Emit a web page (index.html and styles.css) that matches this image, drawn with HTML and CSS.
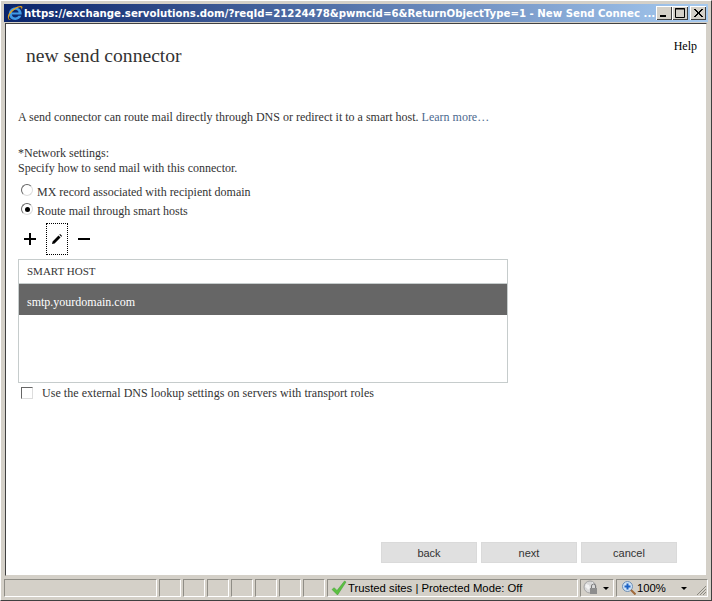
FILE: index.html
```html
<!DOCTYPE html>
<html lang="en">
<head>
<meta charset="utf-8">
<title>New Send Connector</title>
<link rel="stylesheet" href="styles.css">
</head>
<body>
<div class="window">
  <div class="titlebar">
    <svg class="ie" width="16" height="17" viewBox="1 1 17 17"><path d="M16.5 10.500H6.200c.2 2 1.700 3.200 3.600 3.200 1.400 0 2.600-.6 3.300-1.700h3.100c-1 2.700-3.400 4.300-6.400 4.300-3.900 0-6.800-2.800-6.800-6.600C3 6 5.800 3.200 9.800 3.200c3.900 0 6.800 2.900 6.800 6.800zM6.300 8.400h7c-.2-1.700-1.600-2.800-3.500-2.800-1.800 0-3.200 1.100-3.500 2.800z" fill="#3f9ae6"/><path d="M2.200 14.500C.8 11.500 5 5 12.500 2.100c2.600-1 4.400-.9 4.800.2.300.8-.1 2-1 3.200.2-1.200.2-2-.3-2.400-1-.8-3.300 0-5.800 1.500C5.800 7.400 2.700 11 3 14.200c.1 1.300 1 2 2.500 2-1.500.6-2.800.1-3.300-1.700z" fill="#e8a317"/></svg>
    <span class="title">https://exchange.servolutions.dom/?reqId=21224478&amp;pwmcid=6&amp;ReturnObjectType=1 - New Send Connec ...</span>
    <div class="winbtns">
      <span class="winbtn"><svg width="16" height="14" viewBox="0 0 16 14"><rect x="4" y="9" width="6" height="2" fill="#000"/></svg></span>
      <span class="winbtn"><svg width="16" height="14" viewBox="0 0 16 14"><path d="M3.500 2.500h9v9h-9z M3 3h10" fill="none" stroke="#000"/></svg></span>
      <span class="winbtn close"><svg width="16" height="14" viewBox="0 0 16 14"><path d="M4 3l8 8M12 3l-8 8M5 3l8 8M13 3l-8 8" fill="none" stroke="#000"/></svg></span>
    </div>
  </div>
  <main class="client">
    <header class="head">
      <h1>new send connector</h1>
      <a class="help">Help</a>
    </header>
    <p class="intro">A send connector can route mail directly through DNS or redirect it to a smart host. <a class="link">Learn more…</a></p>
    <p class="label">*Network settings:<br>Specify how to send mail with this connector.</p>
    <div class="radios">
      <div class="radio-row"><span class="radio"></span><span>MX record associated with recipient domain</span></div>
      <div class="radio-row"><span class="radio on"></span><span>Route mail through smart hosts</span></div>
    </div>
    <div class="toolbar">
      <span class="tool"><svg width="14" height="14" viewBox="0 0 14 14"><path d="M6 1h2v5h5v2H8v5H6V8H1V6h5z" fill="#000"/></svg></span>
      <span class="tool focus"><svg width="14" height="14" viewBox="0 0 14 14"><path d="M2 12l.6-2.600L8.500 3.500l2 2-5.900 5.900zM9.300 2.700l.8-.8 2 2-.8.800z" fill="#000"/></svg></span>
      <span class="tool"><svg width="14" height="14" viewBox="0 0 14 14"><rect x="1" y="6" width="12" height="2" fill="#000"/></svg></span>
    </div>
    <div class="list">
      <div class="list-head">SMART HOST</div>
      <div class="list-row">smtp.yourdomain.com</div>
    </div>
    <div class="check-row"><span class="check"></span><span class="check-text">Use the external DNS lookup settings on servers with transport roles</span></div>
    <div class="actions">
      <button class="btn">back</button>
      <button class="btn">next</button>
      <button class="btn">cancel</button>
    </div>
  </main>
  <footer class="status">
    <span class="cell grow"></span>
    <span class="cell small"></span><span class="cell small"></span><span class="cell small"></span><span class="cell small"></span><span class="cell small"></span><span class="cell small"></span><span class="cell small"></span>
    <span class="cell zone">
      <svg width="16" height="16" viewBox="0 0 16 16"><path d="M1 9.500l2.200-1.800L6 10.500 13.500 1 15 2 6.500 15z" fill="#5cc041" stroke="#3c9a34" stroke-width=".5"/></svg>
      <span>Trusted sites | Protected Mode: Off</span>
    </span>
    <span class="cell lock">
      <svg width="16" height="16" viewBox="0 0 16 16"><circle cx="7" cy="7" r="6" fill="#d9d9d9" stroke="#a5a5a5"/><path d="M3 4l3 1 1 3-2 2-1-2-2-1zM9 2l2 2-2 1z" fill="#f2f2f2"/><rect x="7" y="8" width="7" height="6" fill="#8d8d8d"/><path d="M8.500 8V6a2 2 0 0 1 4 0v2" fill="none" stroke="#777"/></svg>
      <span class="caret"></span>
    </span>
    <span class="cell zoom">
      <svg width="14" height="14" viewBox="0 0 14 14"><circle cx="5.500" cy="5.500" r="5" fill="#cfe3f7" stroke="#6e8fb5"/><path d="M4.500 2.500h2v2h2v2h-2v2h-2v-2h-2v-2h2z" fill="#1c62c4"/><path d="M9 9l4.500 4.500" stroke="#a06a3a" stroke-width="2"/></svg>
      <span>100%</span>
      <span class="caret wide"></span>
      <svg class="grip" width="12" height="12" viewBox="0 0 12 12"><path d="M11 2L2 11M11 5l-6 6M11 8l-3 3" stroke="#8a8880" fill="none"/></svg>
    </span>
  </footer>
</div>
</body>
</html>
```
FILE: styles.css
```css
* { box-sizing: border-box; }
html, body { margin: 0; padding: 0; }
body { width: 712px; height: 601px; overflow: hidden; background: #d4d0c8; font-family: "Liberation Serif", serif; font-size: 12px; color: #333; }
.window { width: 712px; height: 601px; display: flex; flex-direction: column; padding: 3px; border-right: 1px solid #404040; border-bottom: 1px solid #404040; border-top: 1px solid #fff; border-left: 1px solid #fff; background: #d4d0c8; }
.titlebar { flex: none; height: 18px; display: flex; align-items: center; gap: 1px; background: linear-gradient(90deg, #0a246a, #a6caf0); }
.ie { flex: none; margin-left: 3px; }
.title { flex: 1; min-width: 0; white-space: nowrap; overflow: hidden; color: #fff; font: bold 10.2px "DejaVu Sans", sans-serif; }
.winbtns { flex: none; display: flex; padding-right: 2px; }
.winbtn { width: 16px; height: 14px; display: block; background: #d4d0c8; box-shadow: inset 1px 1px 0 #fff, inset -1px -1px 0 #404040; }
.winbtn svg { display: block; }
.winbtn.close { margin-left: 2px; }
.client { flex: 1; min-height: 0; margin: 1px 1px 0; display: flex; flex-direction: column; background: #fff; border-top: 1px solid #404040; border-left: 1px solid #404040; border-right: 1px solid #d4d0c8; border-bottom: 1px solid #d4d0c8; padding: 0 9px 12px 12px; }
.head { display: flex; justify-content: space-between; flex: none; height: 77px; }
h1 { margin: 20px 0 0 8px; font-size: 19.6px; font-weight: normal; line-height: 23px; color: #333; }
.help { margin: 15px 0 0; color: #000; line-height: 15px; }
.intro { margin: 9px 0 0; line-height: 15px; }
.link { color: #4d6a8f; }
.label { margin: 21px 0 0; line-height: 15px; }
.radios { margin-top: 7px; }
.radio-row { display: flex; align-items: center; gap: 4px; height: 19px; margin-left: 3px; }
.radio { width: 12px; height: 12px; align-self: flex-start; margin-top: 1px; border-radius: 50%; border: 1px solid #666; border-right-color: #ddd; border-bottom-color: #ddd; background: #fff; display: block; position: relative; flex: none; }
.radio.on::after { content: ""; position: absolute; left: 3px; top: 3px; width: 5px; height: 5px; border-radius: 50%; background: #000; }
.toolbar { display: flex; height: 32px; margin-top: 2px; align-items: center; gap: 4px; }
.tool { width: 22px; height: 32px; display: flex; align-items: center; justify-content: center; margin-left: 1px; }
.tool.focus { border: 1px dotted #000; }
.list { width: 490px; height: 124px; margin-top: 4px; border: 1px solid #c6cccc; flex: none; background: #fff; }
.list-head { height: 24px; padding-left: 8px; line-height: 23px; font-size: 11px; border-bottom: 1px solid #c6cccc; }
.list-row { height: 31px; padding-left: 8px; line-height: 37px; background: #666; color: #fff; }
.check-row { display: flex; align-items: center; height: 20px; margin-left: 3px; gap: 9px; }
.check-text { letter-spacing: .04px; }
.check { width: 12px; height: 12px; flex: none; display: block; background: #fff; border: 1px solid #666; border-right-color: #ddd; border-bottom-color: #ddd; }
.actions { margin-top: auto; display: flex; gap: 4px; padding-left: 363px; }
.btn { width: 96px; height: 21px; padding: 0; background: #e0e0e0; border: 1px solid #dadada; font: 11px "Liberation Sans", sans-serif; color: #333; }
.status { flex: none; height: 18px; margin-top: 3px; display: flex; gap: 2px; font: 11.3px "Liberation Sans", sans-serif; color: #000; }
.cell { display: flex; align-items: center; flex: none; border: 1px solid #8f8d86; border-right-color: #fff; border-bottom-color: #fff; }
.grow { width: 153px; }
.small { width: 22px; }
.zone { width: 251px; gap: 1px; padding-left: 3px; }
.lock { width: 34px; gap: 2px; padding-left: 2px; }
.zoom { flex: 1; gap: 1px; padding-left: 5px; position: relative; }
.caret { width: 0; height: 0; border: 3px solid transparent; border-top-color: #000; border-bottom: 0; margin-left: 2px; }
.caret.wide { margin-left: 14px; }
.grip { position: absolute; right: 0; bottom: 0; }
```
